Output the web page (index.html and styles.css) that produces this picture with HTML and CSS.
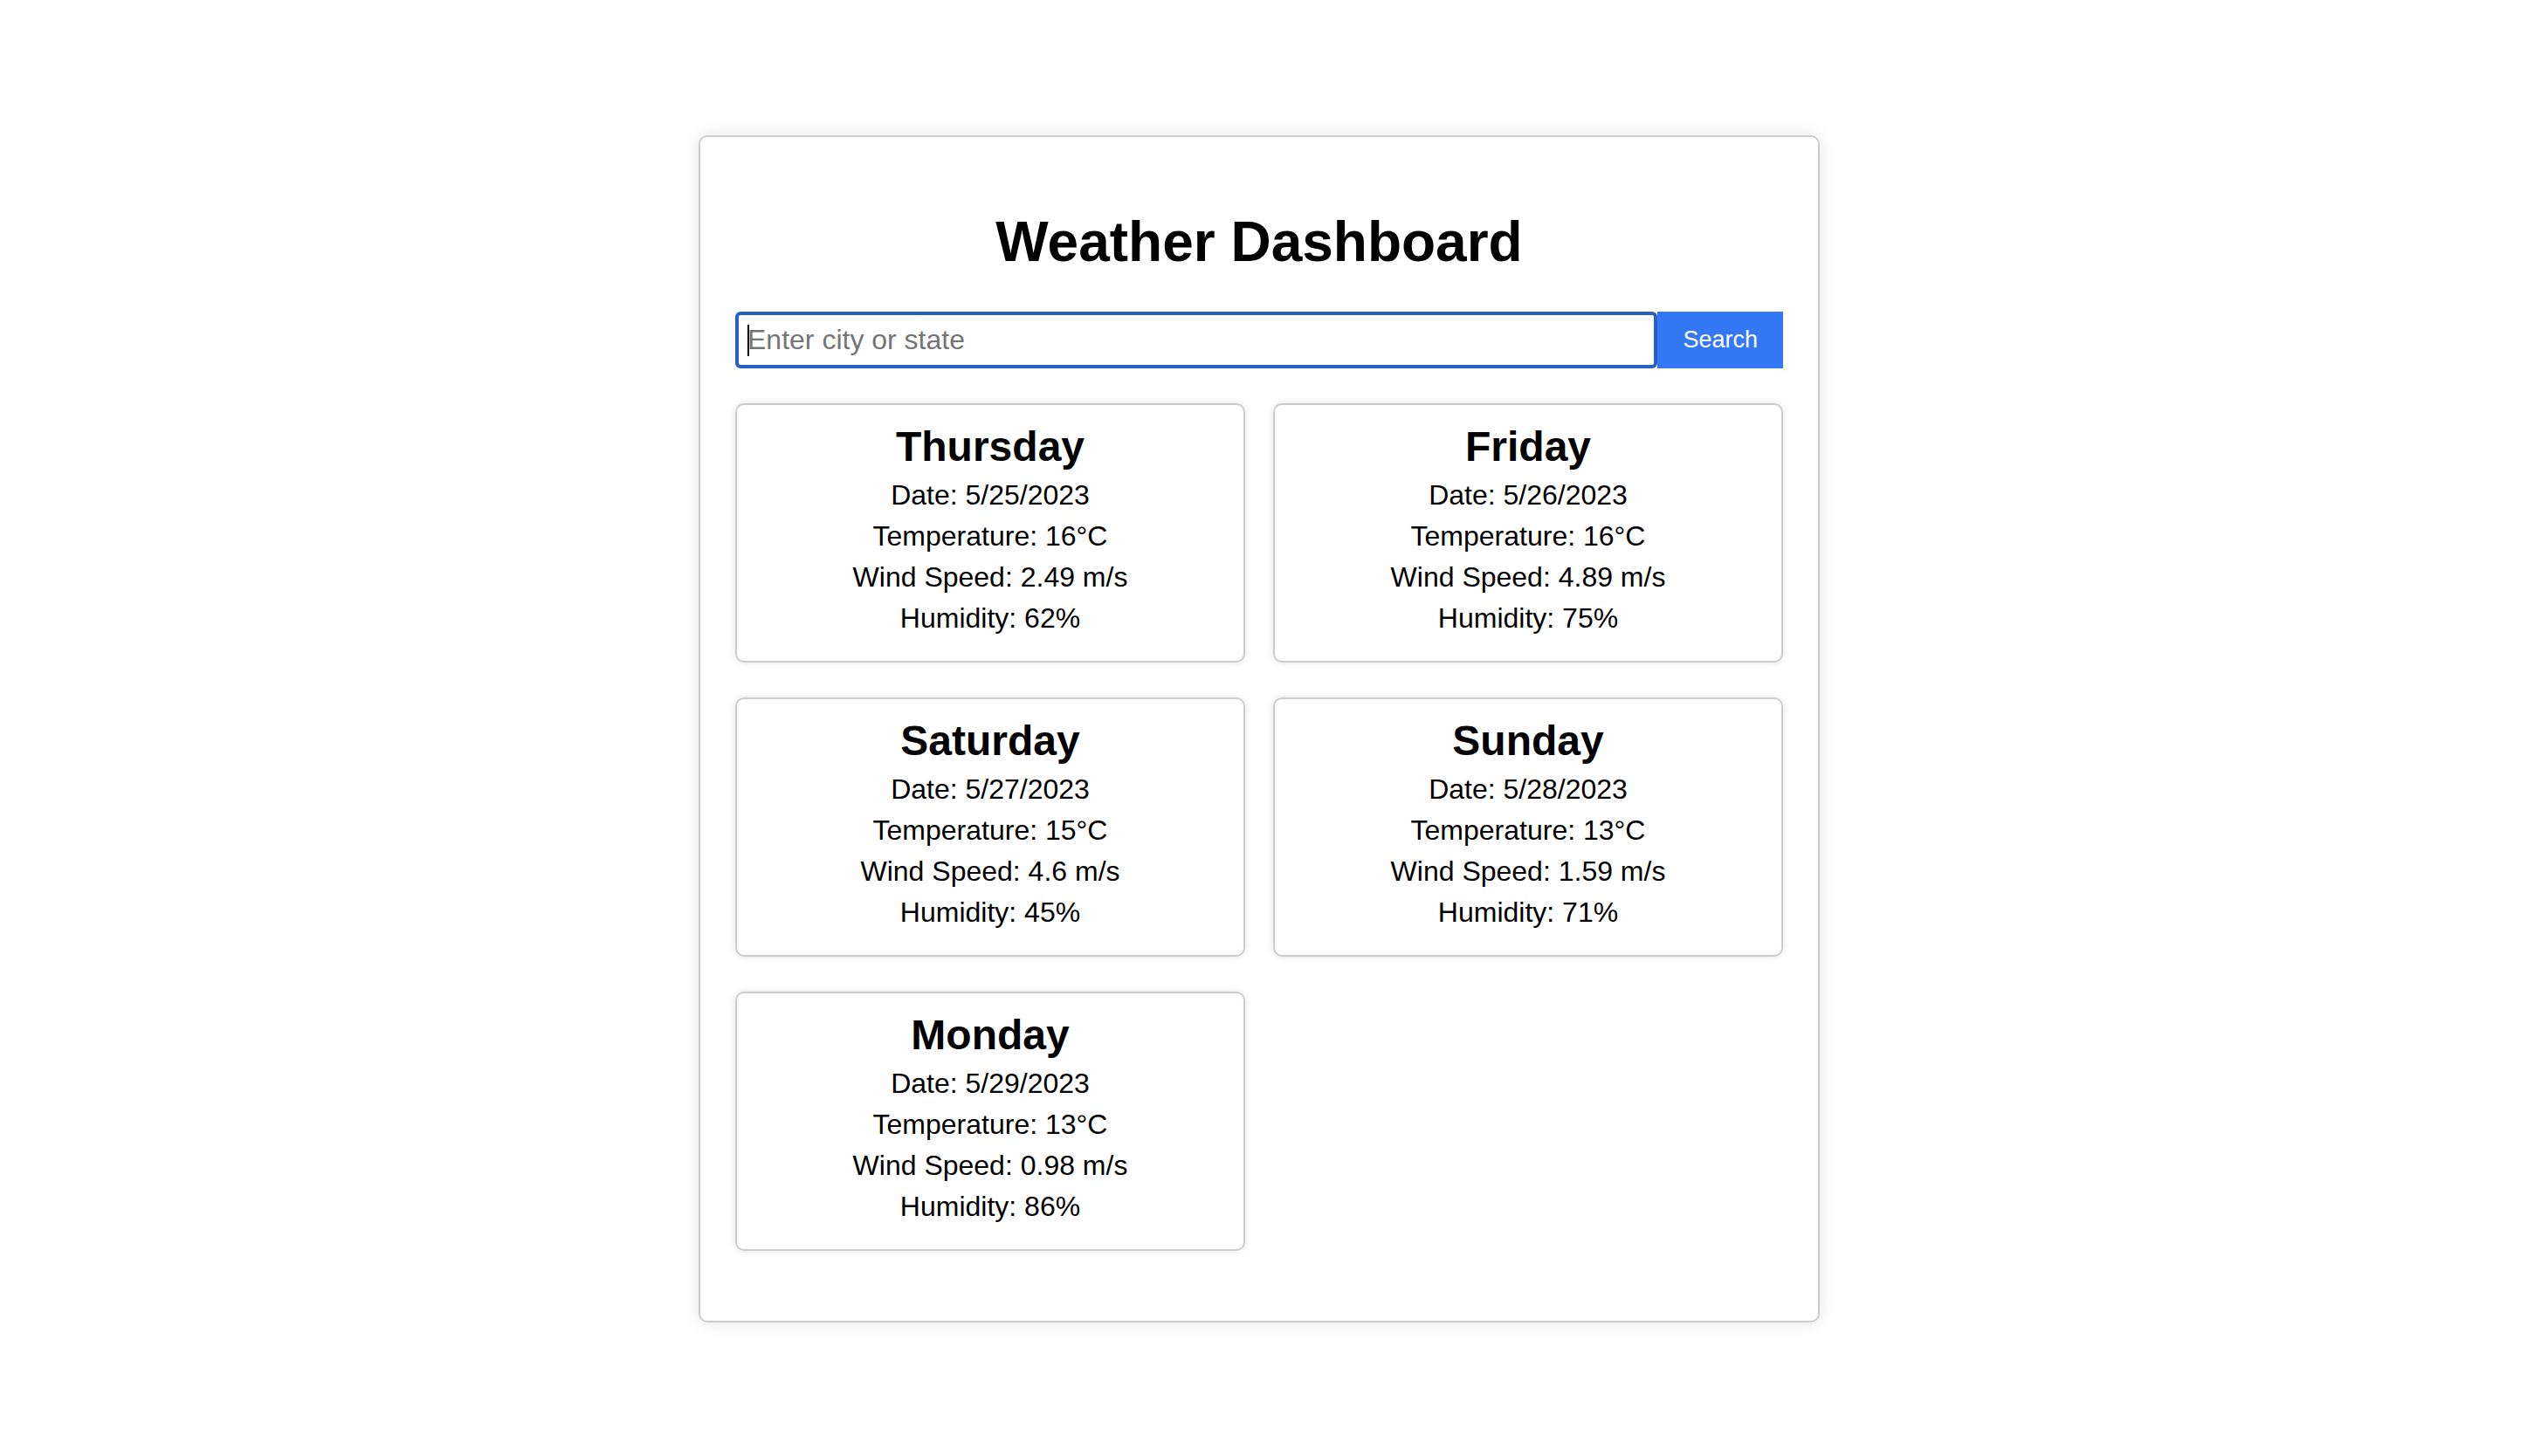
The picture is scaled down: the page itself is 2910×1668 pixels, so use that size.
FILE: index.html
```html
<!DOCTYPE html>
<html lang="en">
<head>
<meta charset="utf-8">
<meta name="viewport" content="width=device-width, initial-scale=1">
<title>Weather Dashboard</title>
<link rel="stylesheet" href="styles.css">
</head>
<body>
<main class="dashboard">
  <h1 class="title">Weather Dashboard</h1>
  <form class="search">
    <input class="search-input" type="text" placeholder="Enter city or state" aria-label="City or state">
    <button class="search-button" type="submit">Search</button>
  </form>
  <section class="forecast">
    <article class="card">
      <h2 class="day">Thursday</h2>
      <p>Date: 5/25/2023</p>
      <p>Temperature: 16°C</p>
      <p>Wind Speed: 2.49 m/s</p>
      <p>Humidity: 62%</p>
    </article>
    <article class="card">
      <h2 class="day">Friday</h2>
      <p>Date: 5/26/2023</p>
      <p>Temperature: 16°C</p>
      <p>Wind Speed: 4.89 m/s</p>
      <p>Humidity: 75%</p>
    </article>
    <article class="card">
      <h2 class="day">Saturday</h2>
      <p>Date: 5/27/2023</p>
      <p>Temperature: 15°C</p>
      <p>Wind Speed: 4.6 m/s</p>
      <p>Humidity: 45%</p>
    </article>
    <article class="card">
      <h2 class="day">Sunday</h2>
      <p>Date: 5/28/2023</p>
      <p>Temperature: 13°C</p>
      <p>Wind Speed: 1.59 m/s</p>
      <p>Humidity: 71%</p>
    </article>
    <article class="card">
      <h2 class="day">Monday</h2>
      <p>Date: 5/29/2023</p>
      <p>Temperature: 13°C</p>
      <p>Wind Speed: 0.98 m/s</p>
      <p>Humidity: 86%</p>
    </article>
  </section>
</main>
</body>
</html>
```
FILE: styles.css
```css
* {
  box-sizing: border-box;
}

body {
  display: flex;
  align-items: center;
  justify-content: center;
  min-height: 100vh;
  margin: 0;
  padding: 2px 26px 0 0;
  background: #fff;
  color: #000;
  font-family: "Liberation Sans", Arial, sans-serif;
  font-size: 32px;
  line-height: 37px;
}

.dashboard {
  width: 100%;
  max-width: 1284px;
  padding: 40px 40px 80px;
  border: 2px solid #ccc;
  border-radius: 10px;
  box-shadow: 0 0 20px rgba(0, 0, 0, 0.1);
}

.title {
  margin: 43px 0;
  font-size: 64px;
  line-height: 74px;
  text-align: center;
}

.search {
  display: flex;
  margin: 0 0 40px;
}

.search-input {
  flex: 1;
  min-width: 0;
  height: 65px;
  padding: 0 10px;
  border: 4px solid #2860c8;
  border-radius: 6px;
  outline: none;
  /* text cursor at the start of the field */
  background: linear-gradient(#000, #000) 10px center / 2px 36px no-repeat #fff;
  color: #000;
  font: inherit;
}

.search-input::placeholder {
  color: #757575;
  opacity: 1;
}

.search-button {
  padding: 0 29px;
  border: 0;
  background: #3478f6;
  color: #fff;
  font-family: inherit;
  font-size: 27px;
}

.forecast {
  display: grid;
  grid-template-columns: 1fr 1fr;
  gap: 40px 32px;
}

.card {
  padding: 20px;
  border: 2px solid #ccc;
  border-radius: 10px;
  box-shadow: 0 0 10px rgba(0, 0, 0, 0.1);
  text-align: center;
}

.card p {
  margin: 0 0 10px;
}

.day {
  margin: 0 0 10px;
  font-size: 48px;
  line-height: 55px;
}
```
